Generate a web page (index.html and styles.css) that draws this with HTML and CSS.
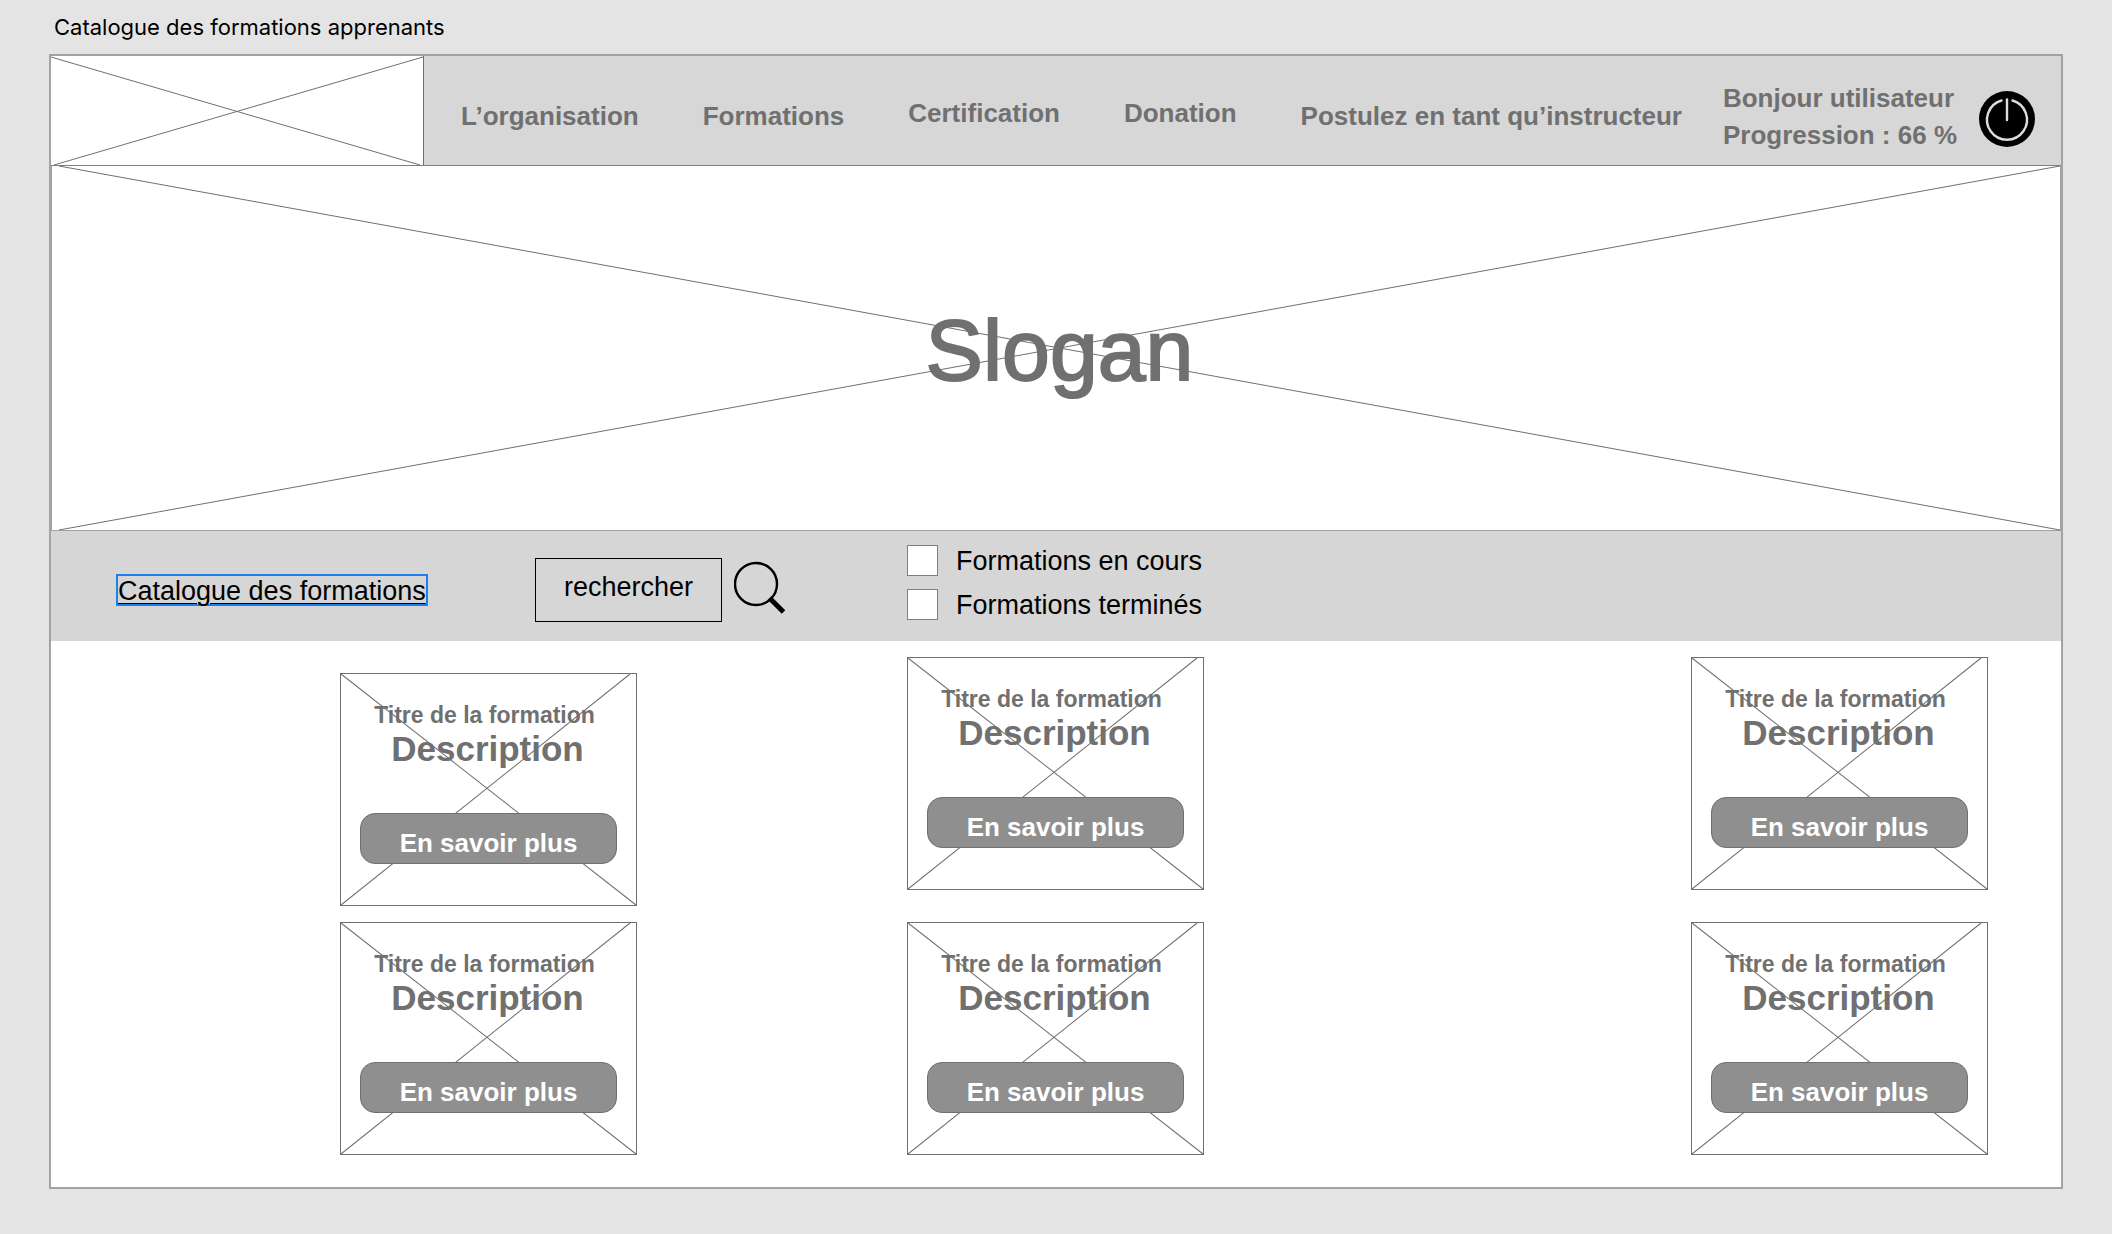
FILE: index.html
```html
<!DOCTYPE html>
<html lang="fr">
<head>
<meta charset="utf-8">
<title>Catalogue des formations apprenants</title>
<link rel="stylesheet" href="styles.css">
</head>
<body>
<h1 class="board-title">Catalogue des formations apprenants</h1>
<div class="board">
  <header class="header">
    <a class="logo" href="#" aria-label="Accueil">
      <svg class="cross" viewBox="0 0 373 109" preserveAspectRatio="none" aria-hidden="true"><path d="M0 1L370 109M373 1L3 109"/></svg>
    </a>
    <nav class="nav">
      <a href="#">L’organisation</a>
      <a href="#">Formations</a>
      <a class="raised" href="#">Certification</a>
      <a class="raised" href="#">Donation</a>
      <a href="#">Postulez en tant qu’instructeur</a>
    </nav>
    <div class="user">
      <p class="user-text">Bonjour utilisateur<br>Progression : 66 %</p>
      <button class="power" type="button" aria-label="Déconnexion">
        <svg viewBox="0 0 56 56" width="56" height="56" aria-hidden="true">
          <circle cx="28" cy="28" r="28" fill="#000"/>
          <path d="M22.500 9.500A20 20 0 1 0 33.500 9.500" fill="none" stroke="#dcdcdc" stroke-width="2.400" stroke-linecap="round"/>
          <path d="M28 8.500V29" fill="none" stroke="#dcdcdc" stroke-width="2.400" stroke-linecap="round"/>
        </svg>
      </button>
    </div>
  </header>

  <section class="hero">
    <svg class="cross" viewBox="0 0 2010 365" preserveAspectRatio="none" aria-hidden="true"><path d="M7 0L2010 365M2010 0L7 365"/></svg>
    <p class="slogan">Slogan</p>
  </section>

  <section class="toolbar">
    <div><a class="catalogue" href="#">Catalogue des formations</a></div>
    <form class="search">
      <input class="search-field" type="text" value="rechercher" aria-label="Rechercher une formation">
      <button class="search-button" type="button" aria-label="Rechercher">
        <svg viewBox="0 0 52 54" width="52" height="54" aria-hidden="true">
          <circle cx="22" cy="23" r="21" fill="none" stroke="#000" stroke-width="2.400"/>
          <path d="M35.500 37L49.500 51" stroke="#000" stroke-width="5"/>
        </svg>
      </button>
    </form>
    <div class="filters">
      <label class="filter"><input type="checkbox"><span>Formations en cours</span></label>
      <label class="filter"><input type="checkbox"><span>Formations terminés</span></label>
    </div>
  </section>

  <main class="cards">
    <article class="card card-first">
      <svg class="cross" viewBox="0 0 297 233" preserveAspectRatio="none" aria-hidden="true"><path d="M0 0L297 233M291 0L0 233"/></svg>
      <h2 class="card-title">Titre de la formation</h2>
      <p class="card-text">Description</p>
      <button class="more" type="button">En savoir plus</button>
    </article>
    <article class="card">
      <svg class="cross" viewBox="0 0 297 233" preserveAspectRatio="none" aria-hidden="true"><path d="M0 0L297 233M291 0L0 233"/></svg>
      <h2 class="card-title">Titre de la formation</h2>
      <p class="card-text">Description</p>
      <button class="more" type="button">En savoir plus</button>
    </article>
    <article class="card">
      <svg class="cross" viewBox="0 0 297 233" preserveAspectRatio="none" aria-hidden="true"><path d="M0 0L297 233M291 0L0 233"/></svg>
      <h2 class="card-title">Titre de la formation</h2>
      <p class="card-text">Description</p>
      <button class="more" type="button">En savoir plus</button>
    </article>
    <article class="card">
      <svg class="cross" viewBox="0 0 297 233" preserveAspectRatio="none" aria-hidden="true"><path d="M0 0L297 233M291 0L0 233"/></svg>
      <h2 class="card-title">Titre de la formation</h2>
      <p class="card-text">Description</p>
      <button class="more" type="button">En savoir plus</button>
    </article>
    <article class="card">
      <svg class="cross" viewBox="0 0 297 233" preserveAspectRatio="none" aria-hidden="true"><path d="M0 0L297 233M291 0L0 233"/></svg>
      <h2 class="card-title">Titre de la formation</h2>
      <p class="card-text">Description</p>
      <button class="more" type="button">En savoir plus</button>
    </article>
    <article class="card">
      <svg class="cross" viewBox="0 0 297 233" preserveAspectRatio="none" aria-hidden="true"><path d="M0 0L297 233M291 0L0 233"/></svg>
      <h2 class="card-title">Titre de la formation</h2>
      <p class="card-text">Description</p>
      <button class="more" type="button">En savoir plus</button>
    </article>
  </main>
</div>
</body>
</html>
```
FILE: styles.css
```css
* {
  box-sizing: border-box;
}

body {
  margin: 0;
  padding: 12px 49px 44px;
  background: #e4e4e4;
  color: #707070;
  font-family: "Liberation Sans", Arial, sans-serif;
  font-size: 26px;
}

h1, h2, p {
  margin: 0;
}

button, input {
  font: inherit;
}

.board-title {
  padding: 0 5px 12px;
  color: #000;
  font: 400 22px/30px Inter, sans-serif;
}

.board {
  border: 2px solid #a2a2a2;
  background: #fff;
}

.cross {
  position: absolute;
  inset: 0;
  width: 100%;
  height: 100%;
  overflow: visible;
  fill: none;
  stroke: #707070;
}

.cross path {
  vector-effect: non-scaling-stroke;
}

/* Header */
.header {
  display: flex;
  align-items: center;
  height: 110px;
  border-bottom: 1px solid #808080;
  background: #d7d7d7;
  font-weight: 700;
}

.logo {
  position: relative;
  flex: none;
  align-self: stretch;
  width: 373px;
  border-right: 1px solid #707070;
  background: #fff;
}

.nav {
  display: flex;
  align-items: center;
  gap: 64px;
  padding: 10px 0 0 37px;
  line-height: 30px;
  white-space: nowrap;
}

.nav a {
  color: inherit;
  text-decoration: none;
}

.nav .raised {
  padding-bottom: 6px;
}

.user {
  display: flex;
  align-items: center;
  gap: 22px;
  margin-left: auto;
  padding: 16px 26px 0 0;
  line-height: 37px;
  white-space: nowrap;
}

.user-text {
  padding-bottom: 4px;
}

.power {
  width: 56px;
  height: 56px;
  padding: 0;
  border: 0;
  background: none;
}

.power svg,
.search-button svg {
  display: block;
}

/* Hero */
.hero {
  position: relative;
  display: flex;
  align-items: center;
  justify-content: center;
  height: 365px;
  border: solid #a2a2a2;
  border-width: 0 1px 1px;
}

.slogan {
  position: relative;
  padding: 4px 0 0 7px;
  font-size: 86px;
  line-height: 100px;
  -webkit-text-stroke: 2px #707070;
}

/* Search bar */
.toolbar {
  display: grid;
  grid-template-columns: 419fr 372fr 1154fr;
  align-items: center;
  height: 110px;
  padding-left: 65px;
  background: #d6d6d6;
  color: #000;
  font-size: 27px;
  white-space: nowrap;
}

.catalogue {
  display: inline-block;
  margin-top: 8px;
  padding-top: 2px;
  border: 2px solid #1c7ff0;
  color: inherit;
  line-height: 26px;
  text-decoration-thickness: 1px;
  text-underline-offset: 3px;
}

.search {
  display: flex;
  align-items: center;
  gap: 12px;
  padding-top: 8px;
}

.search-field {
  width: 187px;
  height: 64px;
  padding: 0 10px 6px;
  border: 1px solid #000;
  background: transparent;
  color: #000;
  text-align: center;
}

.search-button {
  padding: 0 0 4px;
  border: 0;
  background: none;
}

.filters {
  display: grid;
  gap: 11px;
  padding-bottom: 8px;
}

.filter {
  display: flex;
  align-items: center;
  gap: 18px;
  line-height: 31px;
}

.filter span {
  padding-top: 2px;
}

.filter input {
  appearance: none;
  width: 31px;
  height: 31px;
  margin: 0;
  border: 1px solid #808080;
  background: #fff;
}

/* Cards */
.cards {
  display: grid;
  grid-template-columns: 567fr 784fr 370fr;
  align-items: start;
  row-gap: 16px;
  padding: 16px 0 32px 289px;
}

.card {
  position: relative;
  display: flex;
  flex-direction: column;
  align-items: center;
  width: 297px;
  height: 233px;
  padding: 28px 19px 0;
  border: 1px solid #707070;
  text-align: center;
}

.card-first {
  margin-top: 16px;
}

.card-title {
  position: relative;
  padding-right: 8px;
  font-size: 23px;
  line-height: 26px;
}

.card-text {
  position: relative;
  padding-right: 2px;
  font-size: 35px;
  font-weight: 700;
  line-height: 42px;
}

.more {
  position: relative;
  width: 100%;
  height: 51px;
  margin-top: 43px;
  padding: 10px 0 0;
  border: 1px solid #707070;
  border-radius: 15px;
  background: #8f8f8f;
  color: #fff;
  font-weight: 700;
}
```
